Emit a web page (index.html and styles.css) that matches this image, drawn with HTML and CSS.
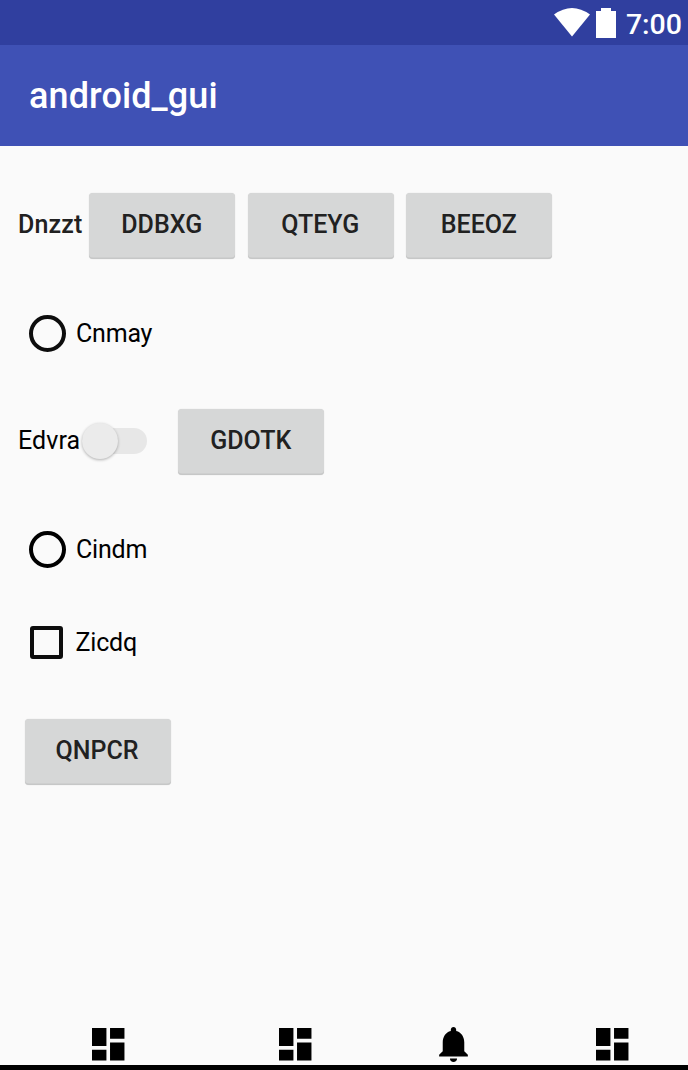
FILE: index.html
```html
<!DOCTYPE html>
<html lang="en">
<head>
<meta charset="utf-8">
<title>android_gui</title>
<link rel="stylesheet" href="styles.css">
</head>
<body>
<div class="screen">
  <div class="status">
    <svg class="wifi" width="36" height="29" viewBox="0 0 36 29"><path d="M0 6.500Q18-6.500 36 6.500L18 28.500z"/></svg>
    <svg class="battery" width="20" height="30" viewBox="0 0 20 30"><path d="M5 0h10v3H20v27H0V3h5z"/></svg>
    <span class="clock">7:00</span>
  </div>
  <header class="appbar"><h1 class="title">android_gui</h1></header>
  <main class="content">
    <div class="row row-top">
      <span class="label label-bold">Dnzzt</span>
      <button class="btn">DDBXG</button>
      <button class="btn">QTEYG</button>
      <button class="btn">BEEOZ</button>
    </div>
    <label class="row option"><span class="radio radio-soft"></span><span class="text">Cnmay</span></label>
    <div class="row row-switch">
      <span class="label label-switch">Edvra</span>
      <span class="switch"><span class="thumb"></span></span>
      <button class="btn">GDOTK</button>
    </div>
    <label class="row option option-second"><span class="radio"></span><span class="text">Cindm</span></label>
    <label class="row option option-check"><span class="check"></span><span class="text">Zicdq</span></label>
    <div class="row row-last"><button class="btn">QNPCR</button></div>
  </main>
  <nav class="nav">
    <svg class="tab tab-one" width="33" height="33" viewBox="3 3 18.300 18.300"><path d="M3 13h8V3H3v10zm0 8h8v-6H3v6zm10 0h8V11h-8v10zm0-18v6h8V3h-8z"/></svg>
    <svg class="tab tab-two" width="33" height="33" viewBox="3 3 18.300 18.300"><path d="M3 13h8V3H3v10zm0 8h8v-6H3v6zm10 0h8V11h-8v10zm0-18v6h8V3h-8z"/></svg>
    <svg class="tab tab-bell" width="29" height="35" viewBox="4 2.500 16 19.500"><path d="M12 22c1.100 0 2-.9 2-2h-4c0 1.100.9 2 2 2zm6-6v-5c0-3.070-1.640-5.640-4.500-6.320V4c0-.83-.67-1.500-1.500-1.500s-1.500.67-1.500 1.500v.68C7.630 5.360 6 7.920 6 11v5l-2 2v1h16v-1l-2-2z"/></svg>
    <svg class="tab tab-four" width="33" height="33" viewBox="3 3 18.300 18.300"><path d="M3 13h8V3H3v10zm0 8h8v-6H3v6zm10 0h8V11h-8v10zm0-18v6h8V3h-8z"/></svg>
  </nav>
</div>
</body>
</html>
```
FILE: styles.css
```css
* { box-sizing: border-box; }
body { margin: 0; font-family: Roboto, sans-serif; color: #000; }
.screen { width: 688px; height: 1070px; display: flex; flex-direction: column; background: #fafafa; border-bottom: 5px solid #000; overflow: hidden; }
.status { height: 45px; flex: none; display: flex; justify-content: flex-end; align-items: flex-start; padding: 8px 6px 0 0; background: #303f9f; color: #fff; fill: #fff; }
.battery { margin-left: 6px; }
.clock { margin-left: 9.500px; font-size: 28.500px; line-height: 34px; font-weight: 500; }
.appbar { height: 101px; flex: none; display: flex; align-items: center; padding-left: 29px; background: #3f51b5; color: #fff; }
.title { margin: 0; font-size: 36px; font-weight: 500; line-height: 42px; letter-spacing: .1px; }
.content { flex: 1; padding-top: 45px; }
.row { display: flex; align-items: center; height: 68px; }
.label, .text { font-size: 25px; line-height: 30px; }
.label { margin-left: 18px; flex: none; }
.label-bold { width: 71.250px; font-weight: 500; color: #212121; letter-spacing: .15px; }
.label-switch { width: 64px; letter-spacing: .1px; }
.btn { width: 146px; height: 66px; flex: none; margin: 2px 12.500px 0 0; padding: 0 1px 3px 0; border: 0; border-radius: 4px; background: #d6d7d7; color: #212121; font: 500 25px/30px Roboto, sans-serif; box-shadow: inset 0 -1.500px 0 #c6c7c7, 0 0 1px rgba(0, 0, 0, .2); }
.row-switch .btn, .row-last .btn { margin-top: 1px; padding-bottom: 1px; }
.option { height: 41px; margin-top: 54px; }
.radio { width: 37px; height: 37px; margin-left: 28.500px; border: 4px solid #000; border-radius: 50%; }
.radio-soft { border-color: #0d0d0d; }
.text { margin: 0 0 0 10.500px; letter-spacing: -.2px; }
.row-switch { margin-top: 53px; }
.switch { width: 65px; height: 26px; margin-right: 31.250px; border-radius: 13px; background: #e7e7e7; display: flex; align-items: center; }
.thumb { width: 36px; height: 36px; flex: none; border-radius: 50%; background: #ebebeb; box-shadow: 0 1px 3px rgba(0, 0, 0, .3); }
.option-second { margin-top: 54px; }
.option-check { margin-top: 52px; }
.check { width: 33px; height: 33px; margin-left: 30px; border: 4px solid #0d0d0d; border-radius: 3px; }
.option-check .text { margin-left: 12.500px; }
.row-last { margin-top: 54px; padding-left: 24.500px; }
.nav { display: flex; align-items: center; height: 42px; padding-left: 91.750px; }
.tab-two { margin-left: 154px; }
.tab-bell { margin-left: 127.250px; }
.tab-four { margin-left: 127.500px; }
```
